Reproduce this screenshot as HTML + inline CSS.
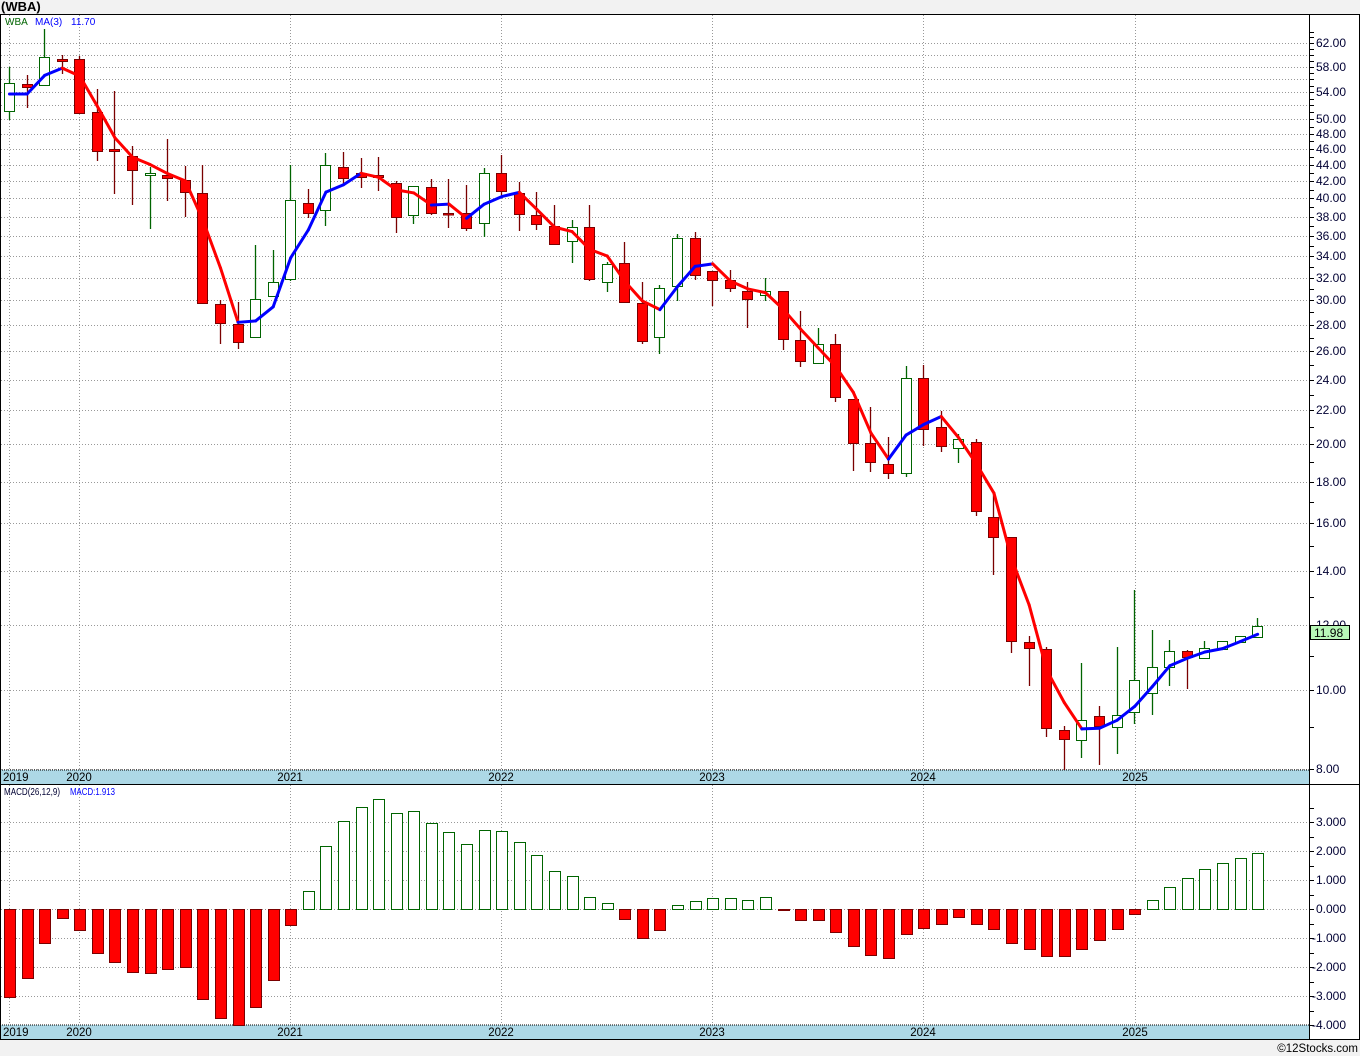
<!DOCTYPE html>
<html><head><meta charset="utf-8">
<style>
html,body{margin:0;padding:0;background:#f2f2f2;width:1360px;height:1056px;overflow:hidden;font-family:"Liberation Sans",sans-serif}
svg{position:absolute;left:0;top:0}
</style></head>
<body>
<svg id="s" width="1360" height="1056" xmlns="http://www.w3.org/2000/svg" font-family="Liberation Sans, sans-serif">
<rect x="0" y="0" width="1360" height="1056" fill="#f2f2f2"/>
<rect x="0" y="14" width="1360" height="1025" fill="#fff"/>
<text x="1" y="11" font-size="13" font-weight="bold" fill="#000">(WBA)</text>
<g id="grid"></g>
<rect x="1" y="770" width="1308" height="14" fill="#add8e6"/>
<rect x="1" y="1025" width="1308" height="14" fill="#add8e6"/>
<line x1="0" y1="770" x2="1309" y2="770" stroke="#000" stroke-dasharray="1,1"/>
<line x1="0" y1="1025" x2="1309" y2="1025" stroke="#000" stroke-dasharray="1,1"/>
<g id="candles"></g>
<g id="ma"></g>
<g id="macd"></g>
<g fill="#000" font-size="11.5">
<text x="3" y="781">2019</text><text x="79" y="781" text-anchor="middle">2020</text><text x="290" y="781" text-anchor="middle">2021</text><text x="501" y="781" text-anchor="middle">2022</text><text x="712" y="781" text-anchor="middle">2023</text><text x="923" y="781" text-anchor="middle">2024</text><text x="1135" y="781" text-anchor="middle">2025</text>
<text x="3" y="1036">2019</text><text x="79" y="1036" text-anchor="middle">2020</text><text x="290" y="1036" text-anchor="middle">2021</text><text x="501" y="1036" text-anchor="middle">2022</text><text x="712" y="1036" text-anchor="middle">2023</text><text x="923" y="1036" text-anchor="middle">2024</text><text x="1135" y="1036" text-anchor="middle">2025</text>
</g>
<g id="axis" font-size="12" fill="#000033"></g>
<line x1="0" y1="14.5" x2="1360" y2="14.5" stroke="#000"/>
<line x1="0.5" y1="14" x2="0.5" y2="1039" stroke="#000"/>
<line x1="1309.5" y1="14" x2="1309.5" y2="1039" stroke="#000"/>
<line x1="1359.5" y1="14" x2="1359.5" y2="1039" stroke="#000"/>
<line x1="0" y1="784.5" x2="1360" y2="784.5" stroke="#000"/>
<line x1="0" y1="1039.5" x2="1360" y2="1039.5" stroke="#000"/>
<text x="5" y="25" font-size="10" fill="#006400">WBA</text>
<text x="35" y="25" font-size="10" fill="#0000ff">MA(3)</text>
<text x="71" y="25" font-size="10" fill="#0000ff">11.70</text>
<text x="4" y="795" font-size="10" fill="#000033" textLength="56" lengthAdjust="spacingAndGlyphs">MACD(26,12,9)</text>
<text x="70" y="795" font-size="10" fill="#0000ff" textLength="45" lengthAdjust="spacingAndGlyphs">MACD:1.913</text>
<rect x="1310.5" y="625.5" width="39" height="14" fill="#b8f8b8" stroke="#000"/>
<text x="1314" y="637" font-size="12" fill="#000">11.98</text>
<text x="1358" y="1052" font-size="11.5" fill="#000" text-anchor="end">©12Stocks.com</text>
</svg>
<script>
var NS="http://www.w3.org/2000/svg";
function el(p,t,a){var e=document.createElementNS(NS,t);for(var k in a)e.setAttribute(k,a[k]);document.getElementById(p).appendChild(e);return e;}
function py(p){return 769-354.5*Math.log(p/8);}
function yp(y){return 8*Math.exp((769-y)/354.5);}
function X(i){return 9+i*17.58;}
var vx=[9,79,290,501,712,923,1135];
for(var p=8;p<=62;p+=2){var y=Math.round(py(p))+0.5;el("grid","line",{x1:1,y1:y,x2:1309,y2:y,stroke:"#999","stroke-dasharray":"1,2"});}
for(var i=0;i<vx.length;i++){el("grid","line",{x1:vx[i]+0.5,y1:15,x2:vx[i]+0.5,y2:784,stroke:"#999","stroke-dasharray":"1,2"});el("grid","line",{x1:vx[i]+0.5,y1:785,x2:vx[i]+0.5,y2:1039,stroke:"#999","stroke-dasharray":"1,2"});}
for(var v=-4;v<=3;v++){var y=909-29*v+0.5;el("grid","line",{x1:1,y1:y,x2:1309,y2:y,stroke:"#999","stroke-dasharray":"1,2"});}
var labs=[8,10,12,14,16,18,20,22,24,26,28,30,32,34,36,38,40,42,44,46,48,50,54,58,62];
for(var p=8;p<=64;p++){var y=Math.round(py(p))+0.5;if(y<16)continue;el("axis","line",{x1:1309,y1:y,x2:1314,y2:y,stroke:"#000"});}
labs.forEach(function(p){var y=Math.round(py(p));var t=el("axis","text",{x:1316,y:y+4});t.textContent=p.toFixed(2);});
for(var v=-4;v<=3.5;v+=0.5){var y=Math.round(909-29*v)+0.5;el("axis","line",{x1:1309,y1:y,x2:1314,y2:y,stroke:"#000"});}
for(var v=-4;v<=3;v++){var y=909-29*v;var t=el("axis","text",{x:v<0?1312:1316,y:y+4});t.textContent=(v<0?"-":"")+Math.abs(v).toFixed(3);}
var D=[[111,83,67,120],[84,87,75,108],[85,57,29,85],[59,61,55,74],[59,113,56,114],[112,151,89,161],[149,151,91,194],[156,170,146,205],[175,173,167,229],[175,178,139,201],
[180,192,166,217],[193,303,165,303],[304,323,300,344],[324,342,302,349],[337,299,245,338],[296,282,250,296],[279,200,165,281],[203,213,189,218],[210,165,153,226],[167,178,152,184],
[173,177,158,188],[175,177,157,191],[183,217,181,233],[215,186,186,224],[187,213,179,215],[213,214,179,228],[213,228,185,231],[223,173,168,237],[173,191,155,195],[193,214,182,231],
[215,224,192,230],[226,244,205,244],[241,227,220,263],[227,279,205,281],[282,264,262,292],[263,302,242,302],[303,341,282,344],[337,288,285,354],[286,238,234,301],[238,275,232,280],
[271,280,271,306],[280,288,270,292],[291,299,282,328],[295,291,278,301],[291,339,291,350],[340,361,311,367],[363,344,328,363],[344,397,334,402],[399,443,399,471],[443,462,407,472],
[464,473,437,479],[473,378,366,477],[378,429,365,446],[427,446,411,452],[448,439,434,463],[442,511,439,516],[517,537,494,575],[537,641,537,653],[642,648,636,686],[649,728,647,737],
[730,739,726,770],[740,720,663,758],[716,726,706,765],[727,715,647,754],[712,680,590,724],[693,667,630,715],[667,651,640,686],[651,657,650,689],[658,648,641,659],[649,641,641,649],
[642,636,636,642],[637,626,618,638]];
D.forEach(function(d,i){var x=Math.round(X(i));var up=d[1]<d[0];var top=Math.min(d[0],d[1]),bot=Math.max(d[0],d[1]);
var col=up?"#006400":"#7a0000";
el("candles","line",{x1:x+0.5,y1:d[2],x2:x+0.5,y2:d[3],stroke:col,"stroke-width":1.3});
el("candles","rect",{x:x-4.5,y:top+0.5,width:10,height:Math.max(bot-top,1.5),fill:up?"#fff":"#ff0000",stroke:col,"stroke-width":1});});
var c=D.map(function(d){return yp(d[1]);});var m=[];
for(var i=0;i<c.length;i++){if(i<2){m.push(94);continue;}m.push(py((c[i]+c[i-1]+c[i-2])/3));}
for(var i=1;i<m.length;i++){var blue=m[i]<=m[i-1]+0.3;el("ma","line",{x1:X(i-1)+0.5,y1:m[i-1],x2:X(i)+0.5,y2:m[i],stroke:blue?"#0000ff":"#ff0000","stroke-width":3,"stroke-linecap":"round"});}
var M=[997,978,943,918,930,953,962,972,973,969,967,999,1018,1025,1007,980,925,891,846,821,807,799,813,811,823,832,844,830,831,842,855,871,876,897,903,919,938,930,905,901,898,898,900,897,910,920,920,932,946,955,958,934,928,924,917,924,929,943,949,956,956,949,940,929,914,900,887,878,869,863,858,853];
M.forEach(function(y,i){var x=Math.round(X(i))-5;var neg=y>909;
el("macd","rect",{x:x+0.5,y:Math.min(y,909)+0.5,width:11,height:Math.max(Math.abs(y-909),1),fill:neg?"#ff0000":"#fff",stroke:neg?"#7a0000":"#006400","stroke-width":1});});
</script>
</body></html>
